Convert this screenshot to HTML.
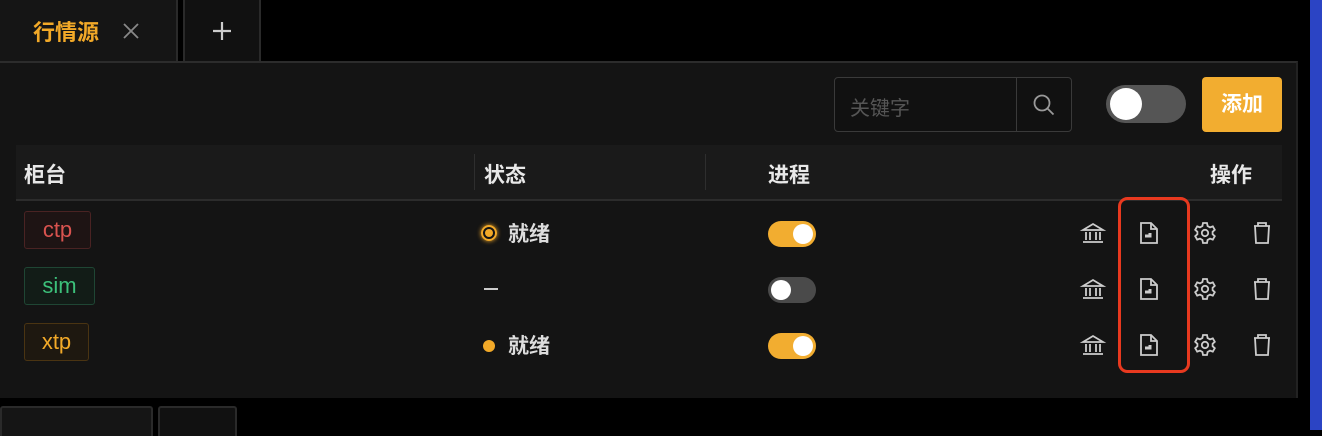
<!DOCTYPE html>
<html><head><meta charset="utf-8"><style>
*{margin:0;padding:0;box-sizing:border-box}
body{width:1322px;height:430px;background:#000;position:relative;overflow:hidden;font-family:"Liberation Sans","Noto Sans CJK SC",sans-serif;color:#ddd}
.a{position:absolute}
.tag{position:absolute;left:24px;height:38px;border-radius:3px;font-size:22px;line-height:36px;padding:0 15px;border:1px solid;text-align:center}
.tg{position:absolute;width:48px;height:26px;border-radius:13px;left:768px}
.tg i{position:absolute;top:3px;width:20px;height:20px;border-radius:50%;background:#fff}
.hd{font-size:21px;font-weight:bold;color:#e8e8e8;top:159px}
.st{font-size:21px;font-weight:bold;color:#ddd;left:508px}
</style></head><body>
<div class="a" style="left:0;top:0;width:178px;height:61px;background:#151515;border-right:2px solid #2a2a2a"></div>
<div class="a" style="left:33px;top:15px;font-size:22px;font-weight:bold;color:#f2a928">行情源</div>
<svg class="a" style="left:122px;top:22px" width="18" height="18" viewBox="0 0 18 18" stroke="#888" stroke-width="1.8"><path d="M2 2l14 14M16 2L2 16"/></svg>
<div class="a" style="left:183px;top:0;width:78px;height:61px;background:#111;border-left:2px solid #2a2a2a;border-right:2px solid #2a2a2a"></div>
<svg class="a" style="left:212px;top:21px" width="20" height="20" viewBox="0 0 20 20" stroke="#ccc" stroke-width="2.2"><path d="M10 1v18M1 10h18"/></svg>
<div class="a" style="left:0;top:61px;width:1298px;height:337px;background:#141414;border-top:2px solid #2c2c2c;border-right:2px solid #222"></div>
<div class="a" style="left:1310px;top:0;width:12px;height:430px;background:#2b44c4"></div>
<div class="a" style="left:834px;top:77px;width:238px;height:55px;border:1px solid #3a3a3a;border-radius:4px;background:#111"></div>
<div class="a" style="left:1016px;top:78px;width:1px;height:53px;background:#3a3a3a"></div>
<div class="a" style="left:850px;top:92px;font-size:20px;color:#555">关键字</div>
<svg class="a" style="left:1031px;top:92px" width="26" height="26" viewBox="0 0 26 26" fill="none" stroke="#999" stroke-width="1.8"><circle cx="11" cy="11" r="7.5"/><path d="M16.5 16.5l6 6"/></svg>
<div class="a" style="left:1106px;top:85px;width:80px;height:38px;border-radius:19px;background:#555"><i style="position:absolute;left:4px;top:3px;width:32px;height:32px;border-radius:50%;background:#fff"></i></div>
<div class="a" style="left:1202px;top:77px;width:80px;height:55px;background:#f2ad30;border-radius:4px;color:#fff;font-size:21px;font-weight:bold;text-align:center;line-height:55px">添加</div>
<div class="a" style="left:16px;top:145px;width:1266px;height:56px;background:#1a1a1a;border-bottom:2px solid #2c2c2c"></div>
<div class="a" style="left:474px;top:154px;width:1px;height:36px;background:#2e2e2e"></div>
<div class="a" style="left:705px;top:154px;width:1px;height:36px;background:#2e2e2e"></div>
<div class="a hd" style="left:24px">柜台</div>
<div class="a hd" style="left:484px">状态</div>
<div class="a hd" style="left:768px">进程</div>
<div class="a hd" style="left:1210px">操作</div>
<div class="tag" style="top:211px;width:67px;padding:0;color:#d9534f;border-color:#4a2323;background:#1e1414">ctp</div>
<div class="tag" style="top:267px;width:71px;padding:0;color:#3cc07a;border-color:#1f4634;background:#121c17">sim</div>
<div class="tag" style="top:323px;width:65px;padding:0;color:#f2a928;border-color:#4a3412;background:#1e1810">xtp</div>
<div class="a" style="left:481px;top:225px;width:16px;height:16px;border-radius:50%;border:2px solid #f2a928;box-shadow:0 0 5px #f2a928"><i style="position:absolute;left:2px;top:2px;width:8px;height:8px;border-radius:50%;background:#f2a928"></i></div>
<div class="a st" style="top:218px">就绪</div>
<div class="a" style="left:484px;top:288px;width:14px;height:2px;background:#ccc"></div>
<div class="a" style="left:483px;top:340px;width:12px;height:12px;border-radius:50%;background:#f2a928"></div>
<div class="a st" style="top:330px">就绪</div>
<div class="tg" style="top:221px;background:#f2ad30"><i style="left:25px"></i></div>
<div class="tg" style="top:277px;background:#4a4a4a"><i style="left:3px"></i></div>
<div class="tg" style="top:333px;background:#f2ad30"><i style="left:25px"></i></div>
<svg class="a" style="left:0;top:0" width="1322" height="430">
<defs>
<g id="bank" fill="none" stroke="#ccc" stroke-width="1.8"><path d="M2 9L12 3l10 6z"/><path d="M5 11v8M9 11v8M15 11v8M19 11v8M2 21h20"/></g>
<g id="doc" fill="none" stroke="#ccc" stroke-width="1.8"><path d="M4 2h10l6 6v14H4z"/><path d="M14 2v6h6"/><path d="M8 15h5v-3" stroke-width="3"/></g>
<g id="gear" fill="none" stroke="#ccc" stroke-width="1.8"><path d="M10 2h4l.6 3 2.4 1.4 2.8-1 2 3.4-2.2 2v2.4l2.2 2-2 3.4-2.8-1L14.6 19 14 22h-4l-.6-3L7 17.6l-2.8 1-2-3.4 2.2-2v-2.4l-2.2-2 2-3.4 2.8 1L9.4 5z"/><circle cx="12" cy="12" r="3.2"/></g>
<g id="trash" fill="none" stroke="#ccc" stroke-width="1.8"><path d="M4 5h16M8 5V2h8v3M5 5l1 17h12l1-17"/></g>
</defs>
<use href="#bank" x="1081" y="221"/><use href="#doc" x="1137" y="221"/><use href="#gear" x="1193" y="221"/><use href="#trash" x="1250" y="221"/>
<use href="#bank" x="1081" y="277"/><use href="#doc" x="1137" y="277"/><use href="#gear" x="1193" y="277"/><use href="#trash" x="1250" y="277"/>
<use href="#bank" x="1081" y="333"/><use href="#doc" x="1137" y="333"/><use href="#gear" x="1193" y="333"/><use href="#trash" x="1250" y="333"/>
<rect x="1119.5" y="198.5" width="69" height="173" rx="8" fill="none" stroke="#e8391f" stroke-width="3"/>
</svg>
<div class="a" style="left:0;top:406px;width:153px;height:30px;background:#151515;border:2px solid #2a2a2a;border-bottom:none;border-radius:3px 3px 0 0"></div>
<div class="a" style="left:158px;top:406px;width:79px;height:30px;background:#111;border:2px solid #2a2a2a;border-bottom:none;border-radius:3px 3px 0 0"></div>
</body></html>
